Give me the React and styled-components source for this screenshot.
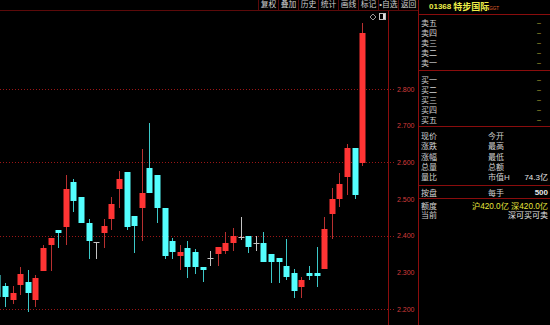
import React from 'react';
import styled, { createGlobalStyle } from 'styled-components';

const GlobalStyle = createGlobalStyle`
  html, body {
    margin: 0;
    padding: 0;
    background: #000;
  }
  body {
    font-family: "Liberation Sans", "Noto Sans CJK SC", sans-serif;
  }
  * { box-sizing: border-box; }
`;

const LINE = '#8a0d0d';
const UP = '#ff3434';
const DOWN = '#54ffff';

const Screen = styled.div`
  display: flex;
  width: 550px;
  height: 325px;
  background: #000;
  overflow: hidden;
`;

const ChartColumn = styled.div`
  display: flex;
  flex-direction: column;
  width: 418px;
`;

const Toolbar = styled.div`
  display: flex;
  justify-content: flex-end;
  height: 11px;
  border-bottom: 1px solid #5c0a0a;
`;

const ToolButton = styled.div`
  width: 20px;
  border-left: 1px solid #5c0a0a;
  color: #cfcfcf;
  font-size: 7.8px;
  line-height: 10px;
  text-align: center;
  white-space: nowrap;
  overflow: hidden;
`;

const ChartSvg = styled.svg`
  display: block;
  width: 418px;
  height: 314px;
`;

const Panel = styled.div`
  display: flex;
  flex-direction: column;
  width: 132px;
  border-left: 1px solid ${LINE};
  color: #d2d2d2;
  font-size: 8px;
`;

const Title = styled.div`
  display: flex;
  align-items: center;
  height: 15px;
  padding: 0 0 1px 10px;
  border-bottom: 1px solid ${LINE};
  color: #eeee4a;
  white-space: nowrap;
`;

const Code = styled.span`
  font-weight: bold;
  font-size: 8px;
  margin-right: 2px;
`;

const Name = styled.span`
  font-size: 9px;
  font-weight: bold;
`;

const Tag = styled.span`
  font-size: 4.5px;
  color: #e0602e;
  align-self: flex-end;
  margin-bottom: 2px;
`;

const Section = styled.div`
  padding: ${p => p.$pad};
  border-bottom: ${p => (p.$open ? 'none' : `1px solid ${LINE}`)};
`;

const Row = styled.div`
  display: grid;
  grid-template-columns: 67px 1fr auto;
  align-items: center;
  height: ${p => p.$h || 10}px;
  padding: 0 ${p => p.$right || 2}px 0 2px;
  white-space: nowrap;
`;

const Label = styled.span`
  grid-column: ${p => p.$col || 1};
  grid-row: 1;
`;

const Dash = styled.span`
  color: #b8b83a;
  font-size: 7px;
  grid-column: 3;
  grid-row: 1;
`;

const Value = styled.span`
  grid-column: ${p => (p.$wide ? '1 / 4' : '3')};
  grid-row: 1;
  justify-self: end;
  color: ${p => p.$color || '#e8e8e8'};
  font-size: ${p => p.$size || 8}px;
  font-weight: ${p => (p.$bold ? 'bold' : 'normal')};
`;

const tools = ['复权', '叠加', '历史', '统计', '画线', '标记', '•自选', '返回'];

// [type, bodyTop, bodyBottom, wickTop, wickBottom]  u=up(red) d=down(cyan) x=doji
const candles = [
  ['d', 275, 297, 272, 300],
  ['d', 286, 297, 283, 307],
  ['u', 293, 300, 286, 304],
  ['u', 274, 285, 267, 295],
  ['d', 282, 293, 270, 312],
  ['u', 278, 300, 275, 307],
  ['u', 248, 271, 245, 271],
  ['u', 238, 245, 238, 271],
  ['d', 230, 233, 230, 248],
  ['u', 189, 227, 175, 245],
  ['d', 182, 201, 179, 212],
  ['d', 197, 223, 197, 223],
  ['d', 223, 241, 219, 259],
  ['x', 242, 242, 242, 259],
  ['u', 226, 233, 219, 248],
  ['u', 204, 219, 197, 230],
  ['u', 179, 189, 171, 208],
  ['d', 172, 227, 172, 230],
  ['d', 216, 226, 216, 253],
  ['u', 193, 208, 149, 241],
  ['d', 168, 193, 123, 193],
  ['d', 175, 208, 175, 223],
  ['d', 208, 256, 208, 259],
  ['d', 241, 252, 238, 259],
  ['u', 252, 256, 245, 270],
  ['d', 248, 267, 241, 278],
  ['d', 252, 267, 249, 274],
  ['d', 267, 270, 267, 282],
  ['x', 258, 258, 251, 266],
  ['u', 247, 254, 247, 266],
  ['u', 243, 251, 232, 254],
  ['u', 236, 243, 228, 251],
  ['x', 237, 237, 217, 240],
  ['d', 236, 247, 236, 253],
  ['x', 243, 243, 236, 251],
  ['d', 243, 262, 232, 262],
  ['d', 254, 262, 254, 283],
  ['d', 258, 262, 258, 283],
  ['d', 266, 277, 239, 280],
  ['d', 273, 291, 269, 298],
  ['u', 280, 287, 277, 298],
  ['d', 273, 276, 266, 280],
  ['d', 273, 276, 247, 287],
  ['u', 229, 269, 217, 269],
  ['u', 199, 214, 188, 239],
  ['u', 184, 199, 173, 207],
  ['u', 148, 177, 144, 195],
  ['d', 148, 195, 148, 199],
  ['u', 33, 163, 23, 166],
];

const priceY = p => 89 + (2.8 - p) * 367;
const levels = [2.8, 2.7, 2.6, 2.5, 2.4, 2.3, 2.2];

const Candle = ({ c, i }) => {
  const [type, bt, bb, wt, wb] = c;
  const x = Math.round(5 + 7.6 * (i - 1));
  if (type === 'x') {
    return (
      <g stroke="#c4c4c4" strokeWidth="1">
        <line x1={x + 0.5} x2={x + 0.5} y1={wt} y2={wb} />
        <line x1={x - 2.5} x2={x + 3.5} y1={bt + 0.5} y2={bt + 0.5} />
      </g>
    );
  }
  const body = type === 'u' ? UP : DOWN;
  const wick = type === 'u' ? '#b83030' : '#3cc8c8';
  return (
    <g>
      <line x1={x + 0.5} x2={x + 0.5} y1={wt} y2={wb} stroke={wick} strokeWidth="1" />
      <rect x={x - 2.5} y={bt} width="6" height={Math.max(bb - bt, 1)} fill={body} />
    </g>
  );
};

const Chart = () => (
  <ChartSvg viewBox="0 11 418 314">
    {[2.8, 2.6, 2.4, 2.2].map(p => (
      <line key={p} x1="0" x2="396" y1={Math.round(priceY(p)) + 0.5} y2={Math.round(priceY(p)) + 0.5}
        stroke="#9a1616" strokeWidth="1" strokeDasharray="1 2" />
    ))}
    {candles.map((c, i) => <Candle key={i} c={c} i={i} />)}
    <line x1="388.5" x2="388.5" y1="11" y2="325" stroke={LINE} strokeWidth="1" />
    {levels.map(p => (
      <text key={p} x="397" y={priceY(p) + 2.5} fill="#d23c3c" fontSize="7" fontFamily="Liberation Sans, sans-serif">
        {p.toFixed(3)}
      </text>
    ))}
    <path d="M373 14 L376 17 L373 20 L370 17 Z" fill="none" stroke="#bdbdbd" strokeWidth="0.8" />
    <rect x="379.5" y="13.5" width="6" height="6" fill="none" stroke="#bdbdbd" strokeWidth="1" />
    <rect x="383" y="14" width="2" height="5" fill="#e0e0e0" />
  </ChartSvg>
);

const sells = ['卖五', '卖四', '卖三', '卖二', '卖一'];
const buys = ['买一', '买二', '买三', '买四', '买五'];
const infos = [
  ['现价', '今开'],
  ['涨跌', '最高'],
  ['涨幅', '最低'],
  ['总量', '总额'],
  ['量比', '市值H', '74.3亿'],
];

const App = () => (
  <>
    <GlobalStyle />
    <Screen>
      <ChartColumn>
        <Toolbar>
          {tools.map(t => <ToolButton key={t}>{t}</ToolButton>)}
        </Toolbar>
        <Chart />
      </ChartColumn>
      <Panel>
        <Title>
          <Code>01368</Code>
          <Name>特步国际</Name>
          <Tag>GGT</Tag>
        </Title>
        <Section $pad="2px 0 3px">
          {sells.map(s => (
            <Row key={s} $right={9}><Label>{s}</Label><Dash>–</Dash></Row>
          ))}
        </Section>
        <Section $pad="3px 0 2px">
          {buys.map(s => (
            <Row key={s} $right={9}><Label>{s}</Label><Dash>–</Dash></Row>
          ))}
        </Section>
        <Section $pad="3px 0 4px">
          {infos.map(([a, b, v]) => (
            <Row key={a} $h={10.3}>
              <Label>{a}</Label>
              <Label $col={2}>{b}</Label>
              {v && <Value>{v}</Value>}
            </Row>
          ))}
        </Section>
        <Section $pad="0">
          <Row $h={12}>
            <Label>按盘</Label>
            <Label $col={2}>每手</Label>
            <Value $bold>500</Value>
          </Row>
        </Section>
        <Section $pad="0" $open>
          <Row $h={10}>
            <Label>额度</Label>
            <Value $wide $color="#e6e63c" $size={8.2}>沪420.0亿 深420.0亿</Value>
          </Row>
          <Row $h={10}>
            <Label>当前</Label>
            <Value $wide>深可买可卖</Value>
          </Row>
        </Section>
      </Panel>
    </Screen>
  </>
);

export default App;
